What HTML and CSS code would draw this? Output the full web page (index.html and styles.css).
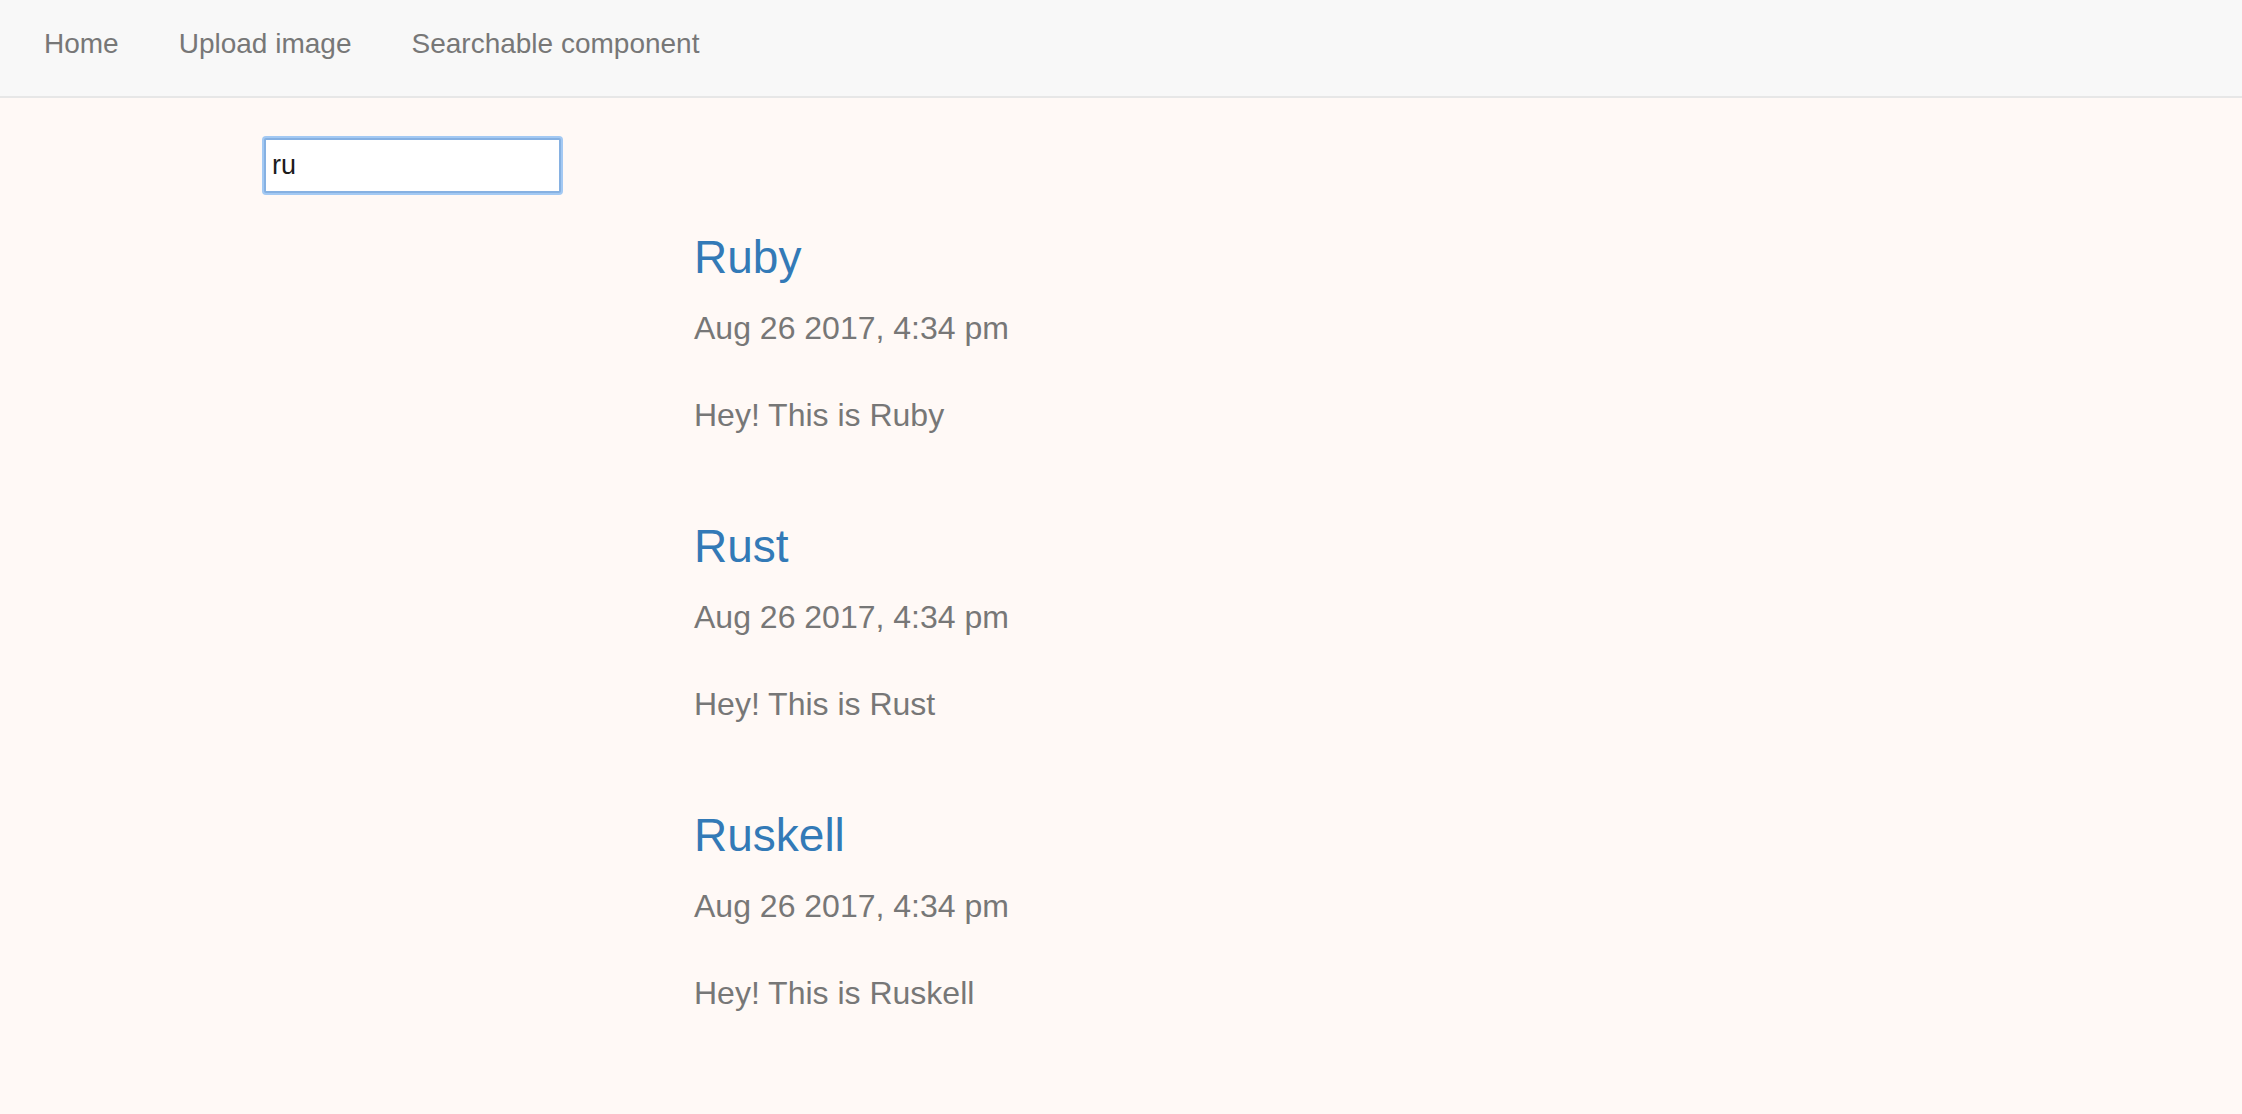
FILE: index.html
```html
<!DOCTYPE html>
<html lang="en">
<head>
<meta charset="utf-8">
<title>Searchable component</title>
<link rel="stylesheet" href="styles.css">
</head>
<body>
<nav class="navbar">
  <a class="nav-link" href="#">Home</a>
  <a class="nav-link" href="#">Upload image</a>
  <a class="nav-link" href="#">Searchable component</a>
</nav>
<main class="main">
  <input class="search" type="text" value="ru">
  <div class="posts">
    <article class="post">
      <h3 class="post-title"><a href="#">Ruby</a></h3>
      <p class="post-date">Aug 26 2017, 4:34 pm</p>
      <p class="post-body">Hey! This is Ruby</p>
    </article>
    <article class="post">
      <h3 class="post-title"><a href="#">Rust</a></h3>
      <p class="post-date">Aug 26 2017, 4:34 pm</p>
      <p class="post-body">Hey! This is Rust</p>
    </article>
    <article class="post">
      <h3 class="post-title"><a href="#">Ruskell</a></h3>
      <p class="post-date">Aug 26 2017, 4:34 pm</p>
      <p class="post-body">Hey! This is Ruskell</p>
    </article>
  </div>
</main>
</body>
</html>
```

FILE: styles.css
```css
html, body {
  margin: 0;
  padding: 0;
}
body {
  background: #fff9f6;
  font-family: "Liberation Sans", Arial, Helvetica, sans-serif;
  color: #777;
  min-height: 1114px;
}
.navbar {
  display: flex;
  box-sizing: border-box;
  height: 98px;
  padding: 24px 0 0 14px;
  background: #f8f8f8;
  border-bottom: 2px solid #e7e7e7;
}
.nav-link {
  display: block;
  padding: 0 30px;
  font-size: 28px;
  line-height: 40px;
  height: 40px;
  color: #777;
  text-decoration: none;
}
.main {
  padding: 40px 0 0 264px;
}
.search {
  display: block;
  box-sizing: border-box;
  width: 297px;
  height: 55px;
  margin: 0;
  padding: 0 6px;
  border: 2px solid #86b1e2;
  border-radius: 2px;
  box-shadow: 0 0 0 2px #a3c9f3;
  outline: none;
  background: #fff;
  font-family: "Liberation Sans", Arial, sans-serif;
  font-size: 27px;
  color: #1c1c1c;
}
.posts {
  margin: 39px 0 0 430px;
}
.post {
  padding-bottom: 86.5px;
}
.post-title {
  margin: 0 0 26px;
  font-size: 46px;
  font-weight: normal;
  line-height: 50px;
}
.post-title a {
  color: #337ab7;
  text-decoration: none;
}
.post-date {
  margin: 0 0 46.7px;
  font-size: 32px;
  line-height: 40px;
  color: #777;
}
.post-body {
  margin: 0;
  font-size: 32px;
  line-height: 40px;
  color: #777;
}
```
